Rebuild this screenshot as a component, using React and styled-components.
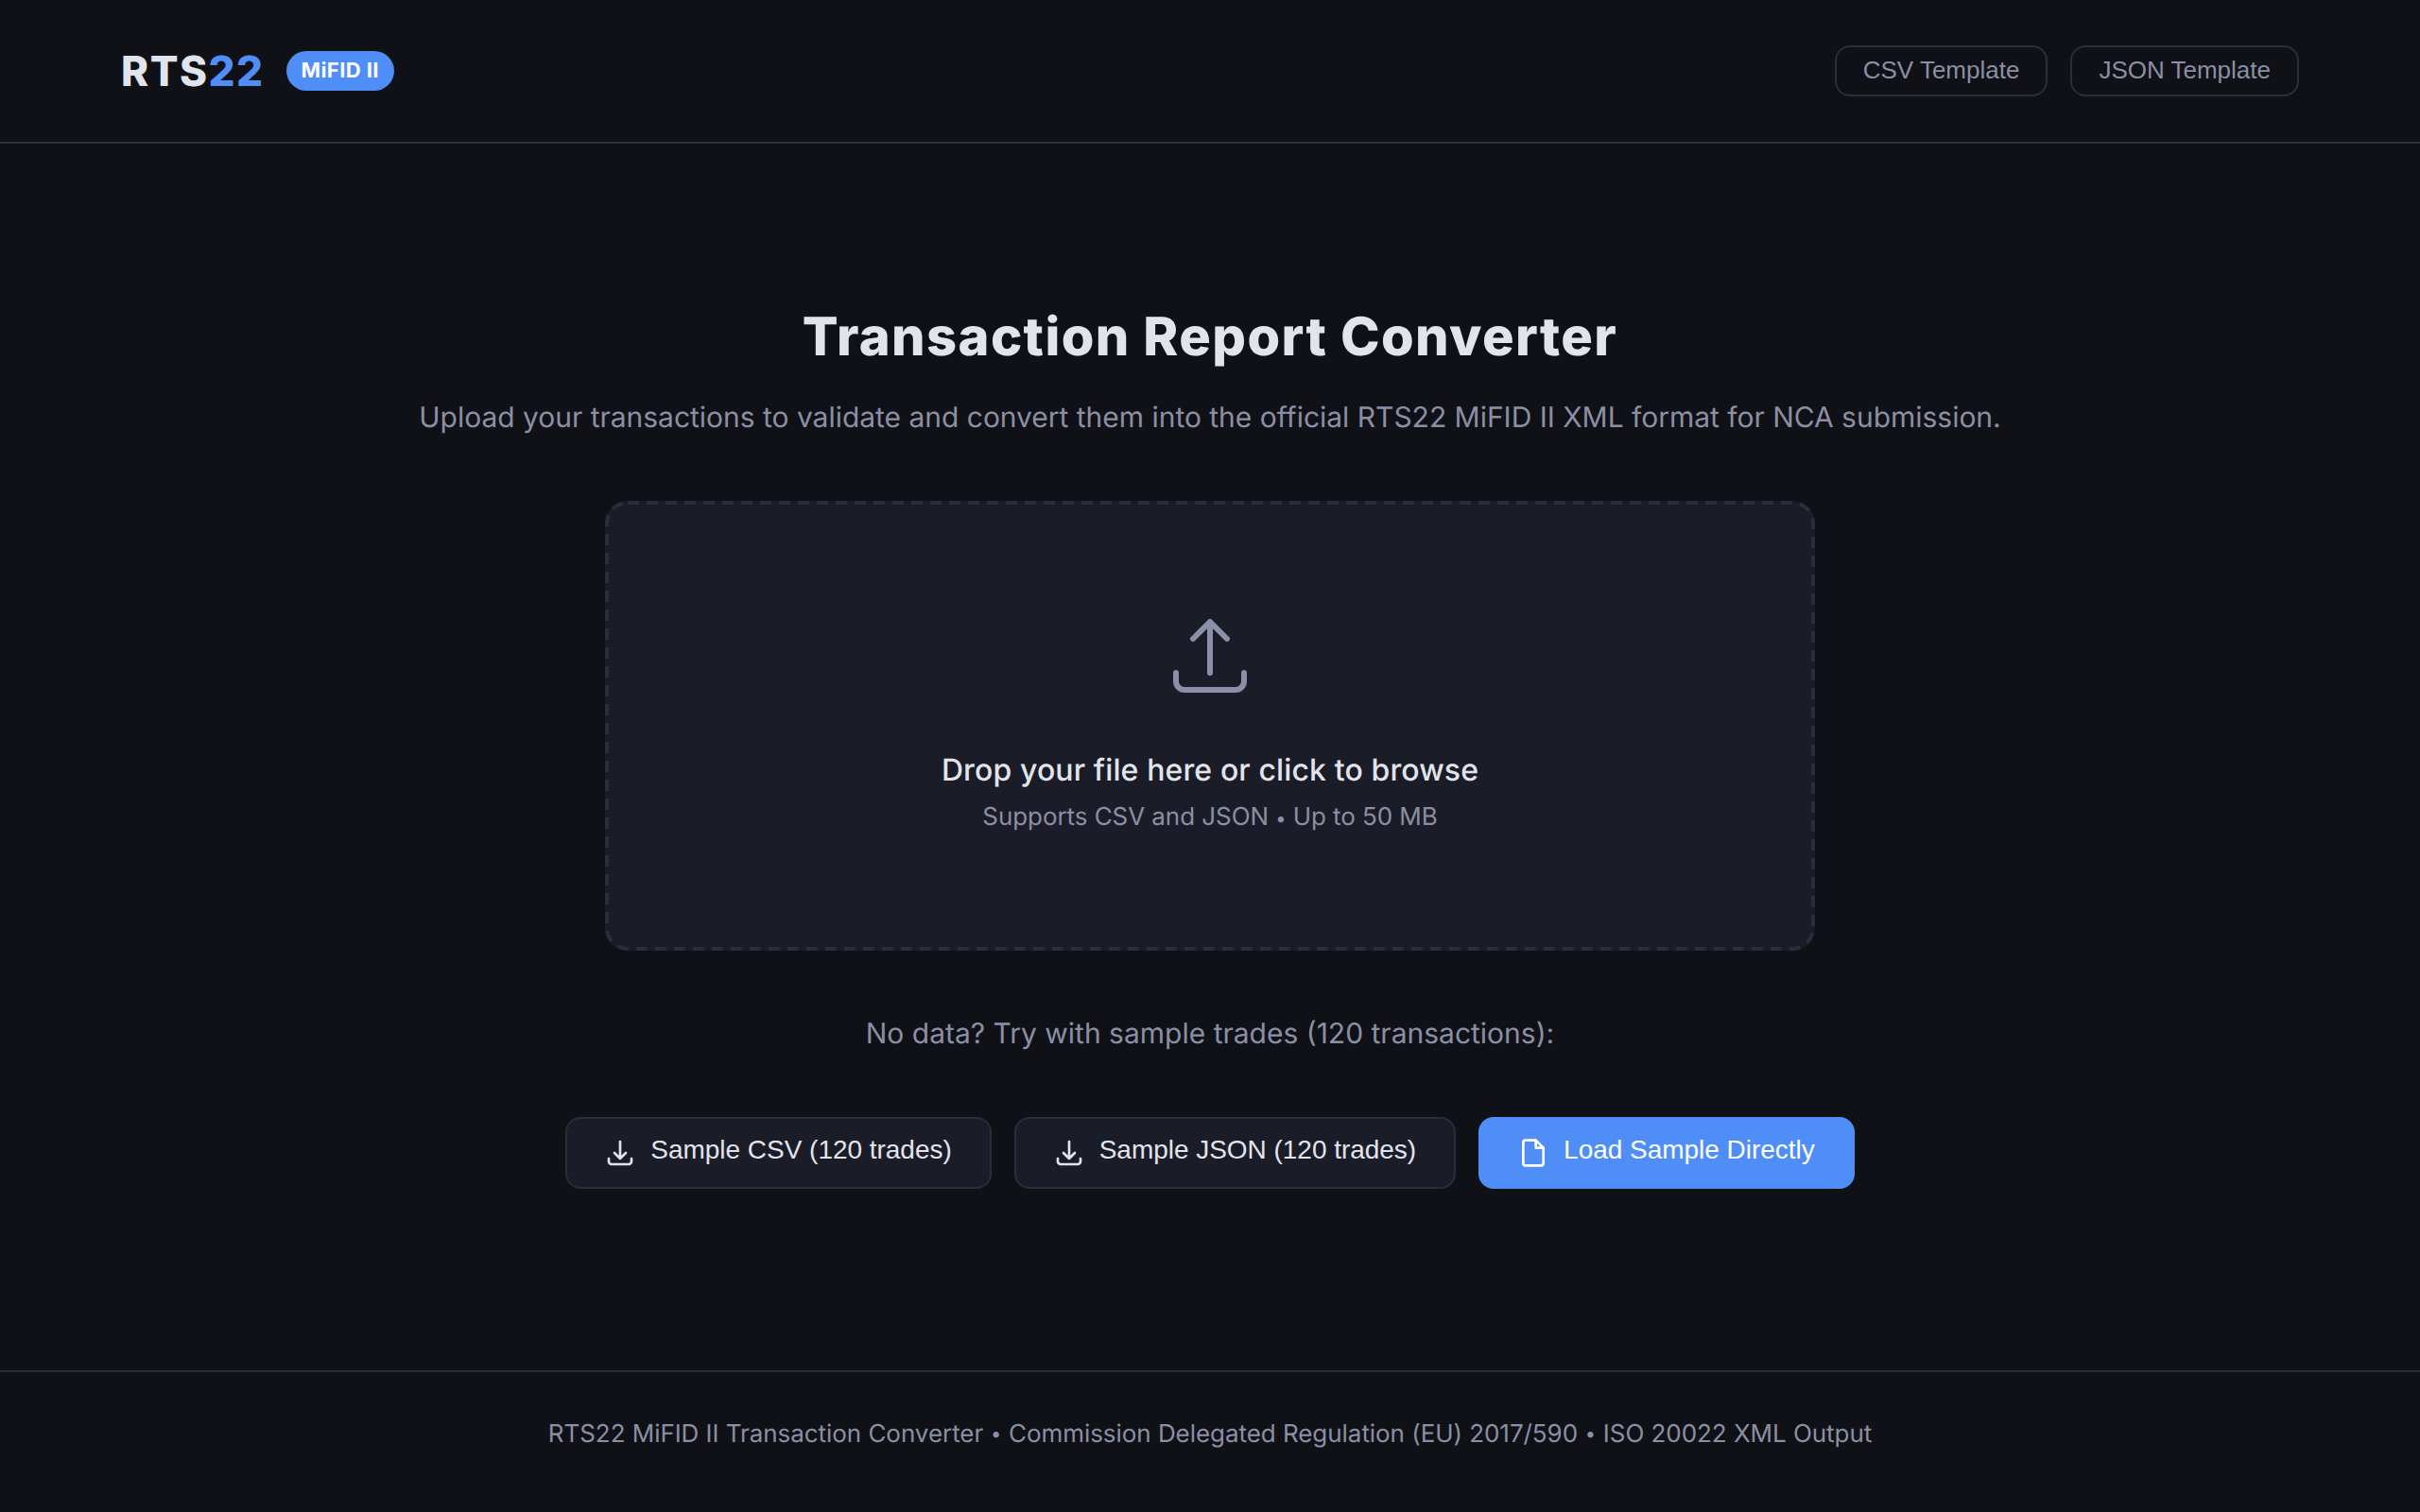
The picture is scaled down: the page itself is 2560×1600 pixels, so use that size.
import React from 'react';
import styled, { createGlobalStyle } from 'styled-components';

const colors = {
  bg: '#0f1117',
  surface: '#1a1d27',
  border: '#2a2d3a',
  accent: '#4f8ef7',
  text: '#e2e4ed',
  muted: '#8b8fa3',
  icon: '#8b8fa8',
};

const GlobalStyle = createGlobalStyle`
  html, body { margin: 0; padding: 0; background: ${colors.bg}; }
  * { box-sizing: border-box; }
  body {
    font-family: Inter, "Liberation Sans", sans-serif;
    -webkit-font-smoothing: antialiased;
    text-rendering: geometricPrecision;
  }
`;

const Page = styled.div`
  width: 100%;
  height: 1600px;
  display: flex;
  flex-direction: column;
  background: ${colors.bg};
  color: ${colors.text};
`;

const Header = styled.header`
  height: 152px;
  flex: none;
  display: flex;
  align-items: center;
  justify-content: space-between;
  padding: 0 128px;
  border-bottom: 2px solid ${colors.border};
`;

const Brand = styled.div`
  display: flex;
  align-items: center;
  gap: 23px;
`;

const Logo = styled.div`
  font-size: 44px;
  font-weight: 800;
  letter-spacing: 1.5px;
  color: ${colors.text};
  span { color: ${colors.accent}; }
`;

const Badge = styled.span`
  height: 42px;
  padding: 0 16px;
  display: inline-flex;
  align-items: center;
  border-radius: 21px;
  background: ${colors.accent};
  color: #fff;
  font-size: 22px;
  font-weight: 700;
  letter-spacing: 0.4px;
`;

const HeaderActions = styled.div`
  display: flex;
  gap: 24px;
`;

const TemplateButton = styled.button`
  height: 54px;
  padding: 0 28px 2px;
  border: 2px solid ${colors.border};
  border-radius: 16px;
  background: transparent;
  color: ${colors.muted};
  font-family: "Liberation Sans", Arial, sans-serif;
  font-size: 26px;
`;

const Main = styled.main`
  flex: 1;
  display: flex;
  flex-direction: column;
  align-items: center;
  padding-top: 168px;
`;

const Title = styled.h1`
  margin: 0;
  font-size: 56px;
  line-height: 72px;
  font-weight: 800;
  letter-spacing: 1.4px;
  color: ${colors.text};
`;

const Subtitle = styled.p`
  margin: 29px 0 0;
  font-size: 30px;
  line-height: 42px;
  letter-spacing: -0.02px;
  color: ${colors.muted};
`;

const DropZone = styled.div`
  position: relative;
  width: 1280px;
  height: 476px;
  margin-top: 67px;
  display: flex;
  flex-direction: column;
  align-items: center;
  padding-top: 116px;
  background: ${colors.surface};
  border-radius: 24px;
`;

// Dash lengths of the outline differ from what a css dashed border draws
const DashedOutline = styled.svg`
  position: absolute;
  inset: 0;
  width: 100%;
  height: 100%;
  fill: none;
  stroke: ${colors.border};
  stroke-width: 4;
  stroke-dasharray: 12 8;
`;

const DropIcon = styled.svg`
  width: 96px;
  height: 96px;
  color: ${colors.icon};
`;

const DropTitle = styled.div`
  margin-top: 51px;
  font-size: 32px;
  line-height: 44px;
  font-weight: 500;
  letter-spacing: 0.12px;
  color: ${colors.text};
`;

const DropHint = styled.div`
  margin-top: 10px;
  font-size: 26px;
  line-height: 36px;
  letter-spacing: -0.07px;
  color: ${colors.muted};
`;

const SmallDot = styled.span`
  font-size: 20px;
`;

const SampleLabel = styled.p`
  margin: 67px 0 0;
  font-size: 30px;
  line-height: 42px;
  color: ${colors.muted};
`;

const SampleRow = styled.div`
  margin-top: 67px;
  display: flex;
  gap: 24px;
`;

const SampleButton = styled.button`
  height: 76px;
  padding: 0 40px;
  display: flex;
  align-items: center;
  gap: 16px;
  border: 2px solid ${({ $primary }) => ($primary ? colors.accent : colors.border)};
  border-radius: 16px;
  background: ${({ $primary }) => ($primary ? colors.accent : colors.surface)};
  color: ${({ $primary }) => ($primary ? '#fff' : colors.text)};
  font-family: "Liberation Sans", Arial, sans-serif;
  font-size: 28px;
  letter-spacing: -0.03px;
`;

const ButtonLabel = styled.span`
  margin-bottom: 6px;
`;

const ButtonIcon = styled.svg`
  width: 32px;
  height: 32px;
  flex: none;
`;

const Footer = styled.footer`
  height: 150px;
  flex: none;
  display: flex;
  align-items: center;
  justify-content: center;
  gap: 0.3em;
  padding-bottom: 18px;
  border-top: 2px solid ${colors.border};
  font-size: 26px;
  letter-spacing: -0.05px;
  color: ${colors.muted};
`;

const DownloadIcon = () => (
  <ButtonIcon viewBox="0 0 24 24" fill="none" stroke="currentColor" strokeWidth="2" strokeLinecap="round" strokeLinejoin="round">
    <path d="M3 16.5v2.25A2.25 2.25 0 0 0 5.25 21h13.5A2.25 2.25 0 0 0 21 18.75V16.5M16.5 12 12 16.5m0 0L7.5 12m4.5 4.5V3" />
  </ButtonIcon>
);

const FileIcon = () => (
  <ButtonIcon viewBox="0 0 24 24" fill="none" stroke="currentColor" strokeWidth="2" strokeLinecap="round" strokeLinejoin="round">
    <path d="M14 2H6a2 2 0 0 0-2 2v16a2 2 0 0 0 2 2h12a2 2 0 0 0 2-2V8z" />
    <path d="M14 2v6h6" />
  </ButtonIcon>
);

export default function App() {
  return (
    <Page>
      <GlobalStyle />
      <Header>
        <Brand>
          <Logo>RTS<span>22</span></Logo>
          <Badge>MiFID II</Badge>
        </Brand>
        <HeaderActions>
          <TemplateButton>CSV Template</TemplateButton>
          <TemplateButton>JSON Template</TemplateButton>
        </HeaderActions>
      </Header>
      <Main>
        <Title>Transaction Report Converter</Title>
        <Subtitle>Upload your transactions to validate and convert them into the official RTS22 MiFID II XML format for NCA submission.</Subtitle>
        <DropZone>
          <DashedOutline viewBox="0 0 1280 476">
            <rect x="2" y="2" width="1276" height="472" rx="22" />
          </DashedOutline>
          <DropIcon viewBox="0 0 24 24" fill="none" stroke="currentColor" strokeWidth="1.5" strokeLinecap="round" strokeLinejoin="round">
            <path d="M3 16.5v2.25A2.25 2.25 0 0 0 5.25 21h13.5A2.25 2.25 0 0 0 21 18.75V16.5m-13.5-9L12 3m0 0 4.5 4.5M12 3v13.5" />
          </DropIcon>
          <DropTitle>Drop your file here or click to browse</DropTitle>
          <DropHint>Supports CSV and JSON <SmallDot>•</SmallDot> Up to 50 MB</DropHint>
        </DropZone>
        <SampleLabel>No data? Try with sample trades (120 transactions):</SampleLabel>
        <SampleRow>
          <SampleButton><DownloadIcon /><ButtonLabel>Sample CSV (120 trades)</ButtonLabel></SampleButton>
          <SampleButton><DownloadIcon /><ButtonLabel>Sample JSON (120 trades)</ButtonLabel></SampleButton>
          <SampleButton $primary><FileIcon /><ButtonLabel>Load Sample Directly</ButtonLabel></SampleButton>
        </SampleRow>
      </Main>
      <Footer>
        <span>RTS22 MiFID II Transaction Converter</span>
        <SmallDot>•</SmallDot>
        <span>Commission Delegated Regulation (EU) 2017/590</span>
        <SmallDot>•</SmallDot>
        <span>ISO 20022 XML Output</span>
      </Footer>
    </Page>
  );
}
